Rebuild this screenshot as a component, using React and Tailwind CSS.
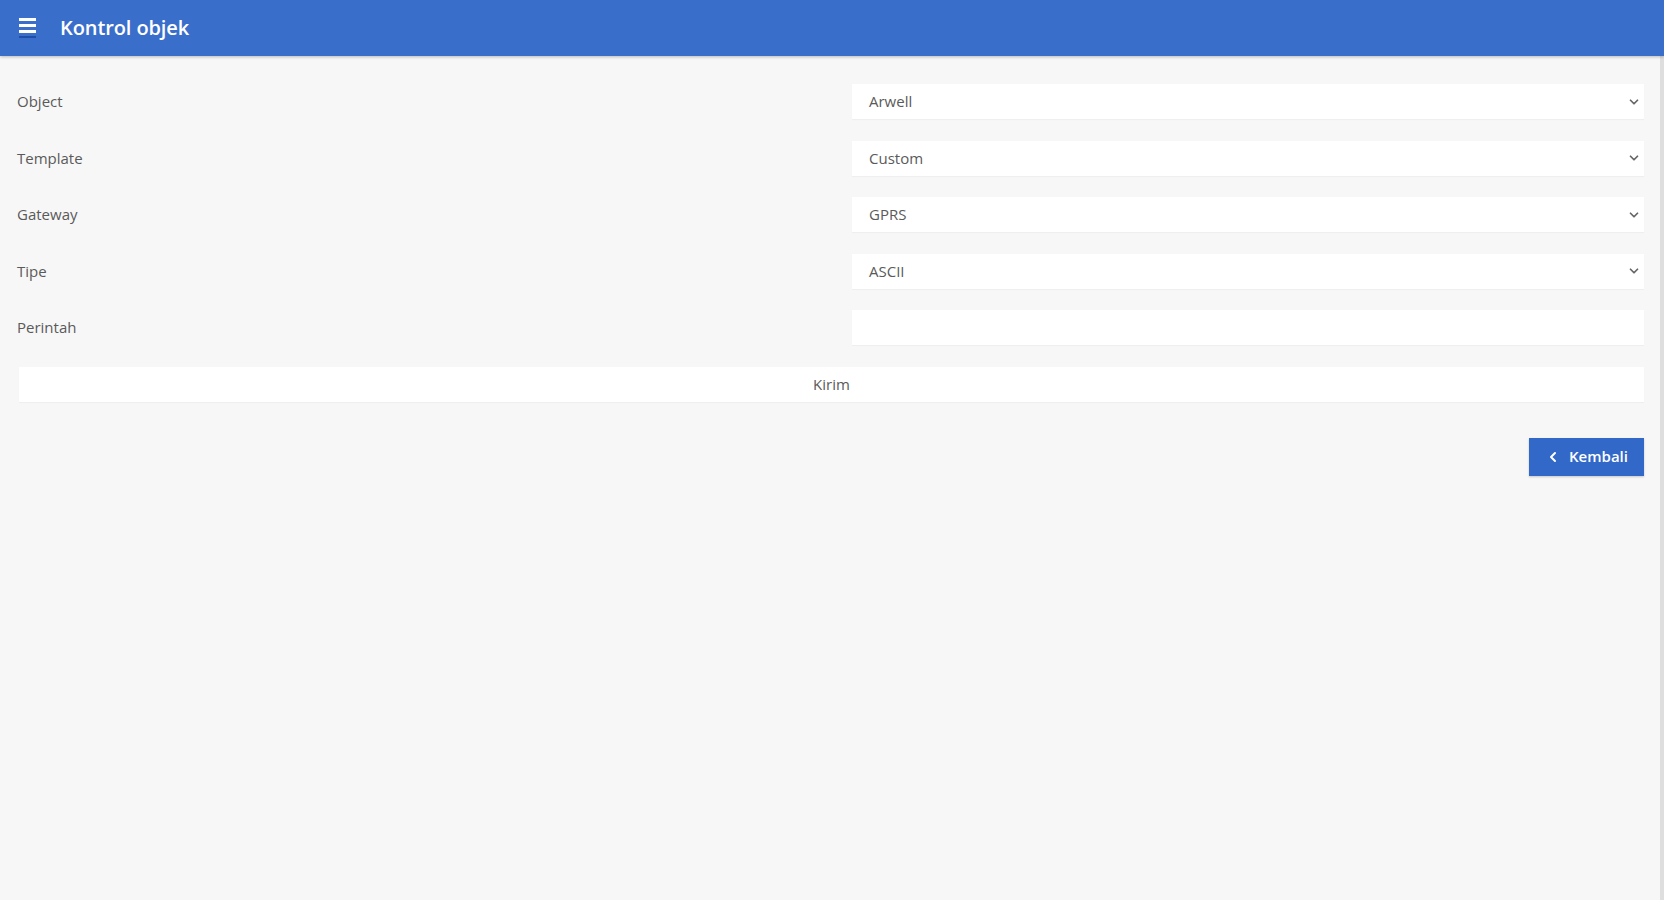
import { ChevronDown, ChevronLeft } from 'lucide-react';

const selects = [
  { label: 'Object', value: 'Arwell' },
  { label: 'Template', value: 'Custom' },
  { label: 'Gateway', value: 'GPRS' },
  { label: 'Tipe', value: 'ASCII' },
];

function Row({ label, children }) {
  return (
    <div className="flex items-center h-[35px]">
      <div className="w-[835px] text-[15px] text-[#5a5a5a]">{label}</div>
      <div className="flex-1 h-full">{children}</div>
    </div>
  );
}

export default function App() {
  return (
    <div
      className="min-h-screen flex flex-col bg-[#f7f7f7]"
      style={{ fontFamily: '"Open Sans", "Noto Sans", sans-serif' }}
    >
      <header className="h-[56px] shrink-0 bg-[#3a6ecb] flex items-center shadow-[0_1px_3px_rgba(0,0,0,0.25)] relative z-10">
        <div className="ml-[19px] flex flex-col gap-[3px] w-[17px]">
          <span className="h-[3px] bg-white" />
          <span className="h-[3px] bg-white" />
          <span className="h-[3px] bg-white" />
          <span className="h-[2px] bg-[#1d4fa8]" />
        </div>
        <h1 className="ml-[24px] text-white text-[20px] font-semibold tracking-[-0.1px]">Kontrol objek</h1>
      </header>
      <div className="flex flex-1">
        <main className="flex-1 pl-[17px] pr-[16px] pt-[28px]">
          <div className="flex flex-col gap-[21.5px]">
            {selects.map((s) => (
              <Row key={s.label} label={s.label}>
                <div className="h-full bg-white flex items-center justify-between pl-[17px] pr-[3px] text-[15px] text-[#5a5a5a] shadow-[0_1px_1px_rgba(0,0,0,0.03)]">
                  <span>{s.value}</span>
                  <ChevronDown size={14} strokeWidth={3} className="text-[#666]" />
                </div>
              </Row>
            ))}
            <Row label="Perintah">
              <div className="h-full bg-white shadow-[0_1px_1px_rgba(0,0,0,0.03)]" />
            </Row>
            <button className="ml-[2px] h-[35px] bg-white text-[15px] text-[#5a5a5a] shadow-[0_1px_1px_rgba(0,0,0,0.03)]">
              Kirim
            </button>
          </div>
          <div className="flex justify-end mt-[36px]">
            <button className="h-[38px] w-[115px] bg-[#3268c8] text-white text-[15px] font-semibold flex items-center justify-center gap-[8px] shadow-[0_1px_2px_rgba(0,0,0,0.2)]">
              <ChevronLeft size={16} strokeWidth={3} />
              Kembali
            </button>
          </div>
        </main>
        <div className="w-[4px] bg-[#dedede]" />
      </div>
    </div>
  );
}
